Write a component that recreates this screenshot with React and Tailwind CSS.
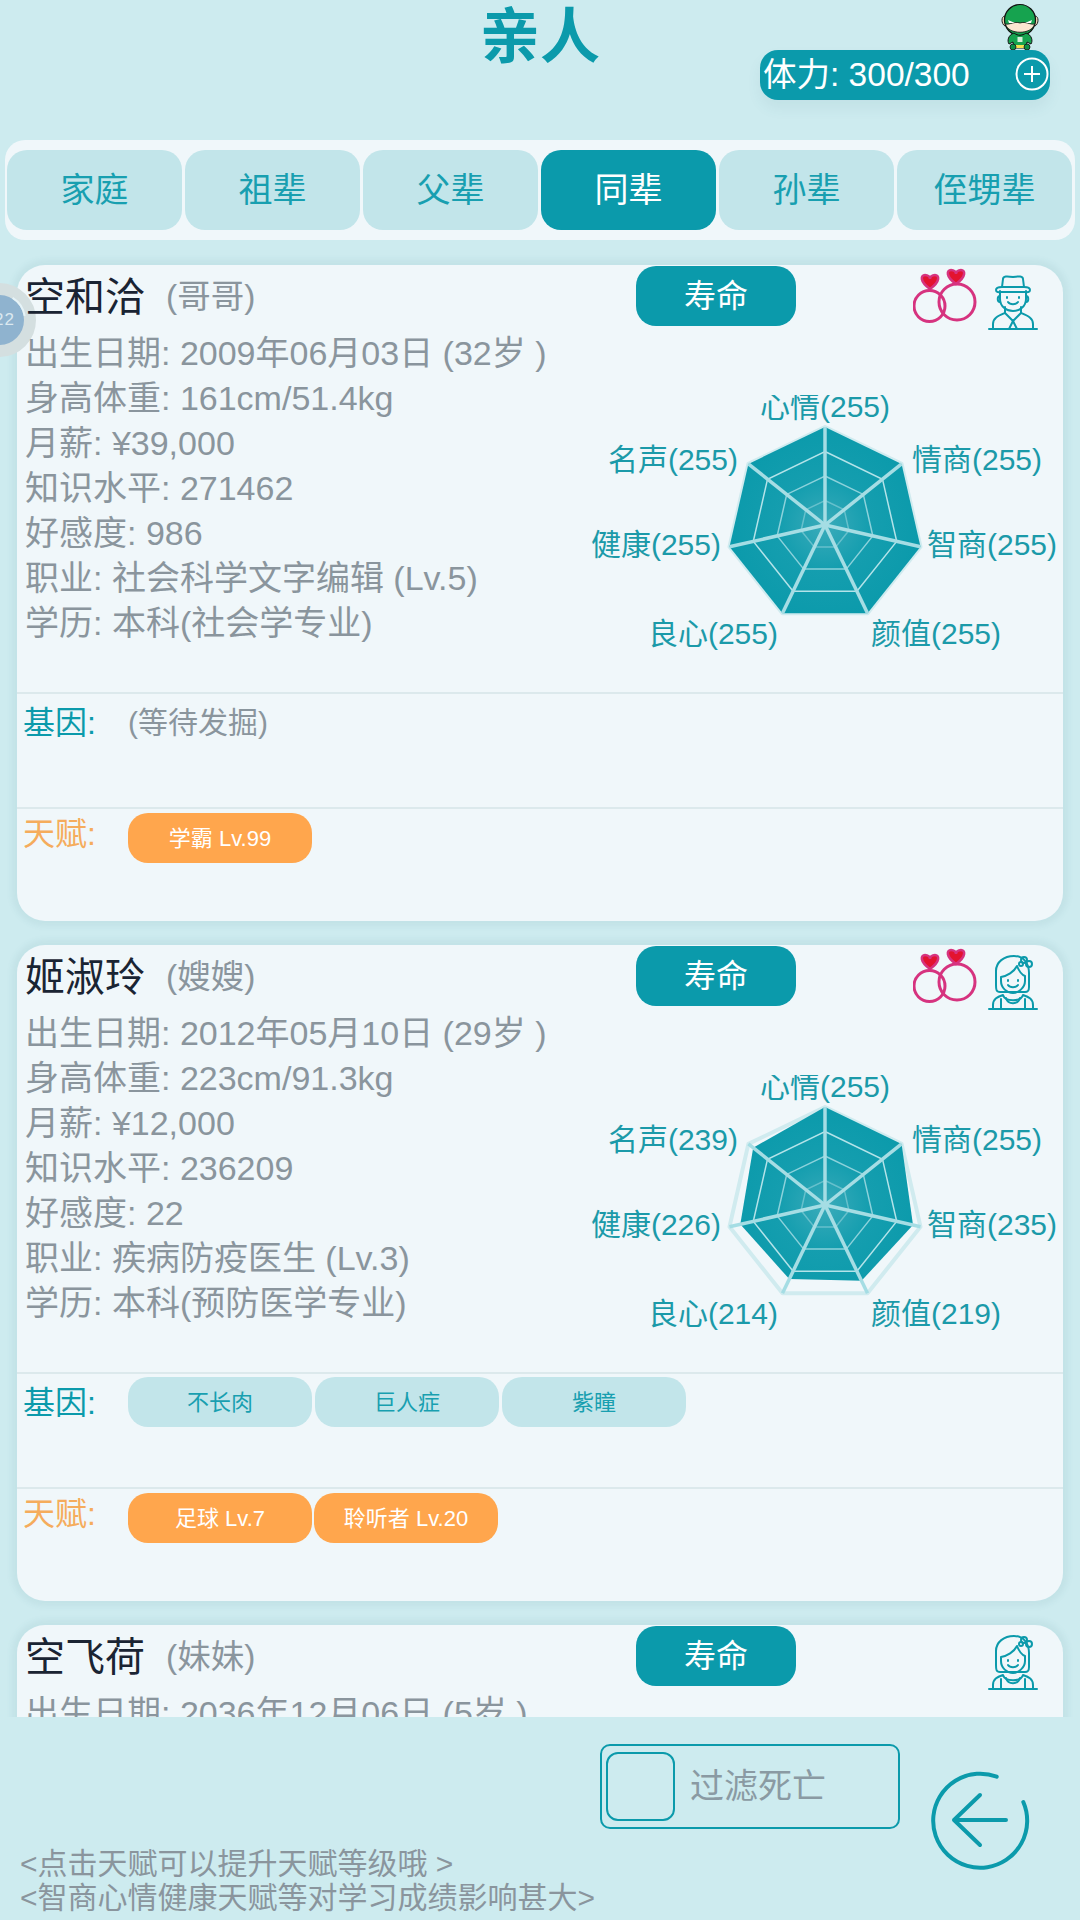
import React from 'react';

const TEAL = '#0b9aab';
const LABELS = ['心情', '情商', '智商', '颜值', '良心', '健康', '名声'];
const CX = 245, CY = 130, R = 98;

function pt(i, v) {
  const a = (-90 + (i * 360) / 7) * Math.PI / 180;
  return [CX + R * v * Math.cos(a), CY + R * v * Math.sin(a)];
}
function poly(vs) {
  return vs.map((v, i) => pt(i, v).map((n) => n.toFixed(1)).join(',')).join(' ');
}
const LABEL_POS = [
  [245, 22, 'middle'],
  [332, 75, 'start'],
  [347, 160, 'start'],
  [291, 249, 'start'],
  [198, 249, 'end'],
  [141, 160, 'end'],
  [158, 75, 'end'],
];

function Radar({ values, id }) {
  const full = [1, 1, 1, 1, 1, 1, 1];
  return (
    <svg width="480" height="270" viewBox="0 0 480 270" className="block">
      <defs>
        <radialGradient id={id} gradientUnits="userSpaceOnUse" cx={CX} cy={CY} r={R}>
          <stop offset="0" stopColor="#3aabba" />
          <stop offset="0.45" stopColor="#159eaf" />
          <stop offset="1" stopColor="#0b9aab" />
        </radialGradient>
      </defs>
      <polygon points={poly(full)} fill="none" stroke="#d0ebef" strokeWidth="4" strokeLinejoin="round" />
      <polygon points={poly(values.map((v) => v / 255))} fill={`url(#${id})`} />
      {[0.75, 0.5, 0.25].map((s) => (
        <polygon key={s} points={poly(full.map(() => s))} fill="none" stroke="#b4e3e9" strokeWidth="1.5" opacity={s === 0.25 ? 0.45 : s === 0.5 ? 0.75 : 1} />
      ))}
      {full.map((_, i) => {
        const [x, y] = pt(i, 1);
        return <line key={i} x1={CX} y1={CY} x2={x} y2={y} stroke="#a5dde4" strokeWidth="3.5" />;
      })}
      {LABELS.map((l, i) => (
        <text key={l} x={LABEL_POS[i][0]} y={LABEL_POS[i][1]} textAnchor={LABEL_POS[i][2]} fontSize="30" fill="#1b9aa9">
          {l}({values[i]})
        </text>
      ))}
    </svg>
  );
}

const HEART = 'M0 7 C-11 -1 -9 -7 -5 -7 C-2 -7 0 -5 0 -3 C0 -5 2 -7 5 -7 C9 -7 11 -1 0 7Z';

function Rings() {
  return (
    <svg width="66" height="60" viewBox="0 0 66 60" className="block">
      <circle cx="16.500" cy="38" r="15.500" fill="none" stroke="#d6337f" strokeWidth="3" />
      <circle cx="44" cy="34" r="18" fill="none" stroke="#d6337f" strokeWidth="3" />
      <path d={HEART} transform="translate(17 14)" fill="#e3132f" stroke="#d6337f" strokeWidth="2.500" />
      <path d={HEART} transform="translate(43 9)" fill="#e3132f" stroke="#d6337f" strokeWidth="2.500" />
    </svg>
  );
}

function Man() {
  return (
    <svg width="50" height="56" viewBox="0 0 50 56" fill="none" stroke={TEAL} strokeWidth="2" strokeLinecap="round" strokeLinejoin="round" className="block">
      <path d="M1 54 H49" />
      <path d="M5 54 V49 C5 43 10 41 17 38 L25 46 L33 38 C40 41 45 43 45 49 V54" />
      <path d="M25 46 L21 54 M25 46 L29 54" />
      <path d="M17 32 V38 M33 32 V38" />
      <path d="M12 16 V24 C12 32 19 36 25 36 C31 36 38 32 38 24 V16" />
      <path d="M8 15 C8 12 12 12 14 12 H36 C38 12 42 12 42 15 C42 18 38 17 36 17 H14 C12 17 8 18 8 15Z" />
      <path d="M14 12 L15 4 C15 1 19 1 25 2 C31 1 35 1 35 4 L36 12" />
      <path d="M12 21 C9 21 9 27 12 27 M38 21 C41 21 41 27 38 27" />
      <path d="M20 27 C22 30 28 30 30 27" />
      <path d="M19 22 V23 M31 22 V23" />
    </svg>
  );
}

function Woman() {
  return (
    <svg width="50" height="56" viewBox="0 0 50 56" fill="none" stroke={TEAL} strokeWidth="2" strokeLinecap="round" strokeLinejoin="round" className="block">
      <path d="M1 54 H49" />
      <path d="M5 54 V50 C5 44 9 42 15 40 C17 47 33 47 35 40 C41 42 45 44 45 50 V54" />
      <path d="M13 54 V44 M37 54 V44 M18 43 C20 50 30 50 32 43" />
      <path d="M12 37 C8 37 8 34 8 30 V16 C8 7 16 1 26 1 C36 1 41 9 41 18 V32 C41 36 40 37 37 37 Z" />
      <path d="M13 22 C19 21 26 17 29 11 C31 16 34 20 37 21 V26 C37 33 30 38 25 38 C19 38 13 33 13 26 Z" />
      <path d="M20 30 C22 33 28 33 30 30" />
      <path d="M20 25 V26 M30 25 V26" />
      <circle cx="36" cy="5" r="3" /><circle cx="41" cy="9" r="3" /><circle cx="33" cy="9" r="2" />
    </svg>
  );
}

function Hero() {
  return (
    <svg width="40" height="50" viewBox="0 0 40 50" className="block">
      <path d="M5 16 C1 16 1 24 5 26 M35 16 C39 16 39 24 35 26" fill="#f3d6b6" stroke="#222" strokeWidth="1" />
      <circle cx="20" cy="20" r="15.500" fill="#16a34f" stroke="#111" strokeWidth="1.200" />
      <path d="M5.500 24 C8 35 32 35 34.500 24 C30 25 26 21 20 23 C14 21 10 25 5.500 24Z" fill="#fbe6d0" stroke="#111" strokeWidth="0.800" />
      <path d="M8 20 L15 23 L9 23Z M32 20 L25 23 L31 23Z" fill="#fff" />
      <path d="M14 33 C8 35 7 41 9 44 L13 42 L14 48 H26 L27 42 L31 44 C33 41 32 35 26 33 C22 36 18 36 14 33Z" fill="#16a34f" stroke="#111" strokeWidth="1" />
      <rect x="17.500" y="37" width="5" height="5" fill="#d3f0d8" />
      <path d="M14 45 H26 V48 H14Z" fill="#f4e04d" />
      <circle cx="13" cy="47" r="3" fill="#0c8f47" stroke="#111" strokeWidth="0.800" />
      <circle cx="27" cy="47" r="3" fill="#0c8f47" stroke="#111" strokeWidth="0.800" />
    </svg>
  );
}

function Tag({ children, talent }) {
  return (
    <div className={talent
      ? 'w-[184px] h-[50px] mr-[2px] rounded-[20px] bg-[#ffa64d] text-white text-[22px] flex items-center justify-center'
      : 'w-[184px] h-[50px] mr-[3px] rounded-[20px] bg-[#c2e5ea] text-[#189fb0] text-[22px] flex items-center justify-center'}>
      {children}
    </div>
  );
}

function Card({ p, id }) {
  return (
    <div className="w-[1046px] h-[656px] shrink-0 mb-[24px] rounded-[28px] bg-[#f0f7fa] shadow-[0_0_6px_5px_rgba(60,120,130,0.07)] flex flex-col">
      <div className="flex h-[429px] border-b-2 border-[#dce9ec]">
        <div className="w-[563px] shrink-0">
          <div className="relative z-20 h-[62px] pl-[8px] pt-[1px] flex items-center">
            <span className="text-[40px] text-[#1a2433] leading-none">{p.name}</span>
            <span className="ml-[21px] text-[33.500px] text-[#8a959d] leading-none">({p.rel})</span>
          </div>
          <div className="relative z-20 pl-[8px] pt-[4px] text-[34px] leading-[45px] text-[#8a959d]">
            {p.info.map((l) => <div key={l} className="whitespace-nowrap">{l}</div>)}
          </div>
        </div>
        <div className="flex-1 min-w-0">
          <div className="h-[62px] flex items-start">
            <div className="ml-[56px] mt-[1px] w-[160px] h-[60px] rounded-[20px] bg-[#0b9aab] text-white text-[32px] flex items-center justify-center">寿命</div>
            <div className="ml-[117px] mt-[3px] w-[66px]">{p.married && <Rings />}</div>
            <div className="ml-[9px] mt-[10px]">{p.female ? <Woman /> : <Man />}</div>
          </div>
          <div className="mt-[68px]"><Radar values={p.values} id={id} /></div>
        </div>
      </div>
      <div className="flex h-[115px] border-b-2 border-[#dce9ec] pl-[6px]">
        <div className="w-[105px] shrink-0 text-[32px] leading-[58px] text-[#0b9aab]">基因:</div>
        <div className="flex pt-[3px] items-start">
          {p.genes.length ? p.genes.map((g) => <Tag key={g}>{g}</Tag>) : <span className="text-[30px] leading-[58px] -mt-[3px] text-[#8a959d]">(等待发掘)</span>}
        </div>
      </div>
      <div className="flex flex-1 pl-[6px]">
        <div className="w-[105px] shrink-0 text-[32px] leading-[50px] text-[#f5ac5c]">天赋:</div>
        <div className="flex pt-[4px] items-start">
          {p.talents.map((g) => <Tag key={g} talent>{g}</Tag>)}
        </div>
      </div>
    </div>
  );
}

const PEOPLE = [
  {
    name: '空和洽', rel: '哥哥', married: true, female: false,
    info: ['出生日期: 2009年06月03日 (32岁 )', '身高体重: 161cm/51.4kg', '月薪: ¥39,000', '知识水平: 271462', '好感度: 986', '职业: 社会科学文字编辑 (Lv.5)', '学历: 本科(社会学专业)'],
    values: [255, 255, 255, 255, 255, 255, 255], genes: [], talents: ['学霸 Lv.99'],
  },
  {
    name: '姬淑玲', rel: '嫂嫂', married: true, female: true,
    info: ['出生日期: 2012年05月10日 (29岁 )', '身高体重: 223cm/91.3kg', '月薪: ¥12,000', '知识水平: 236209', '好感度: 22', '职业: 疾病防疫医生 (Lv.3)', '学历: 本科(预防医学专业)'],
    values: [255, 255, 235, 219, 214, 226, 239], genes: ['不长肉', '巨人症', '紫瞳'], talents: ['足球 Lv.7', '聆听者 Lv.20'],
  },
  {
    name: '空飞荷', rel: '妹妹', married: false, female: true,
    info: ['出生日期: 2036年12月06日 (5岁 )'],
    values: [255, 255, 255, 255, 255, 255, 255], genes: [], talents: [],
  },
];

const TABS = ['家庭', '祖辈', '父辈', '同辈', '孙辈', '侄甥辈'];

export default function App() {
  return (
    <div className="relative w-[1080px] h-[1920px] overflow-hidden bg-[#cdebef] flex flex-col font-['Liberation_Sans','Noto_Sans_CJK_SC',sans-serif]">
      <div className="relative h-[140px] shrink-0">
        <div className="text-center text-[60px] leading-[76px] font-bold text-[#0b9aab]">亲人</div>
        <div className="absolute left-[1000px] top-[0px]"><Hero /></div>
        <div className="absolute left-[760px] top-[50px] w-[290px] h-[50px] rounded-[18px] bg-[#0b9aab] text-white text-[33.500px] leading-[50px] pl-[3px] shadow-[0_8px_14px_rgba(60,120,130,0.08)]">
          体力: 300/300
          <svg width="34" height="34" viewBox="0 0 34 34" className="absolute left-[255px] top-[7px]" fill="none" stroke="#fff" strokeWidth="2">
            <circle cx="17" cy="17" r="15.500" />
            <path d="M17 9 V25 M9 17 H25" />
          </svg>
        </div>
      </div>

      <div className="h-[100px] shrink-0 ml-[5px] mr-[5px] rounded-[20px] bg-[#f0f7fa] flex items-center pl-[2px] gap-[3px]">
        {TABS.map((t) => (
          <div key={t} className={t === '同辈'
            ? 'w-[175px] h-[80px] rounded-[20px] bg-[#0b9aab] text-white text-[34px] flex items-center justify-center'
            : 'w-[175px] h-[80px] rounded-[20px] bg-[#c2e5ea] text-[#189fb0] text-[34px] flex items-center justify-center'}>
            {t}
          </div>
        ))}
      </div>

      <div className="h-[1477px] shrink-0 overflow-hidden pt-[25px] pl-[17px]">
        {PEOPLE.map((p, i) => <Card key={p.name} p={p} id={`radar${i}`} />)}
      </div>

      <div className="flex-1 flex">
        <div className="w-[600px] shrink-0 flex flex-col justify-end pb-[5px] pl-[20px] text-[30px] leading-[34px] text-[#8a959d] whitespace-nowrap">
          <div>&lt;点击天赋可以提升天赋等级哦 &gt;</div>
          <div>&lt;智商心情健康天赋等对学习成绩影响甚大&gt;</div>
        </div>
        <div className="w-[300px] h-[85px] mt-[27px] shrink-0 rounded-[10px] border-2 border-[#0b9aab] flex items-center pl-[4px]">
          <div className="w-[69px] h-[69px] rounded-[12px] border-2 border-[#0b9aab]" />
          <div className="ml-[15px] text-[34px] text-[#8a9aa3]">过滤死亡</div>
        </div>
        <svg width="100" height="100" viewBox="0 0 100 100" className="ml-[30px] mt-[53px]" fill="none" stroke="#0b9aab" strokeLinecap="round" strokeLinejoin="round">
          <path d="M93.300 32 A47 47 0 1 1 66.700 6.700" strokeWidth="4" />
          <path d="M76 50 H24 M50 25 L24 50 L50 75" strokeWidth="4" />
        </svg>
      </div>

      <div className="absolute z-10 left-[-38px] top-[283px] w-[74px] h-[74px] rounded-full border-[12px] border-[#d4dfe0] bg-[#8fb3cf] flex items-center justify-end pr-[9px] text-[17px] tracking-[1px] text-[#dbe8f0]">
        22
        <svg width="54" height="54" viewBox="0 0 54 54" className="absolute left-[-2px] top-[-2px]" fill="none" stroke="#e6f3f7" strokeWidth="2">
          <circle cx="27" cy="27" r="26" strokeDasharray="22 60" strokeDashoffset="28" />
        </svg>
      </div>
    </div>
  );
}
